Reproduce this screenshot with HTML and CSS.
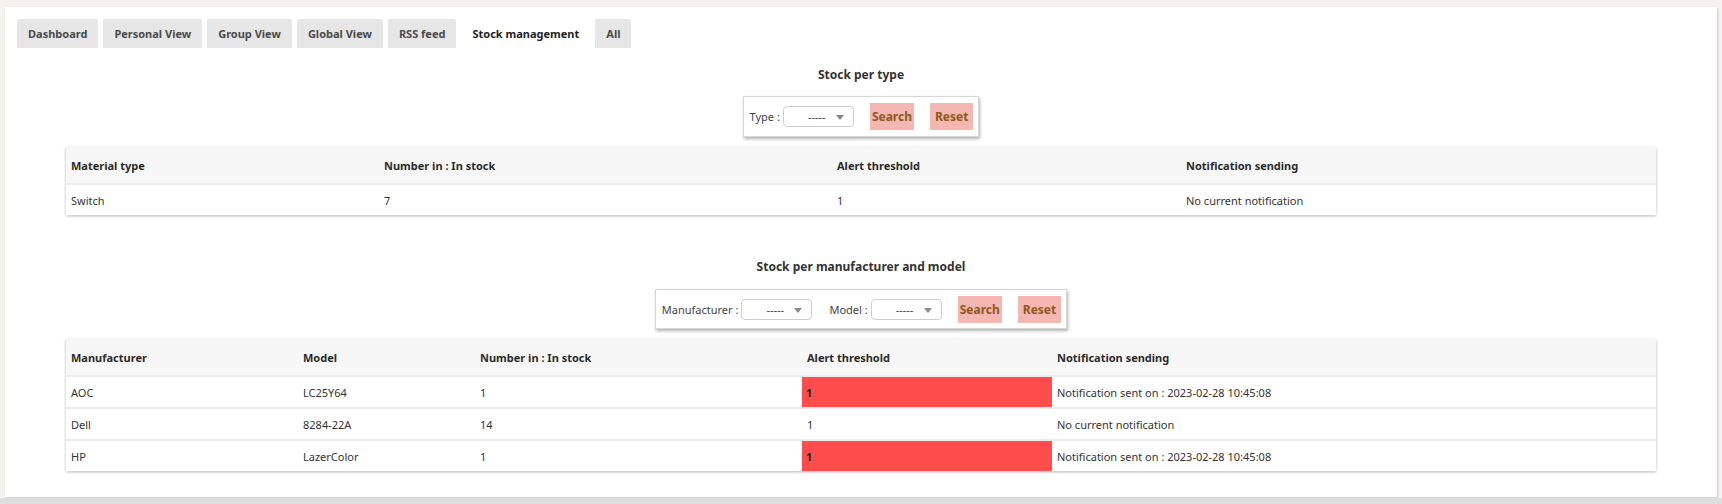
FILE: index.html
```html
<!DOCTYPE html>
<html>
<head>
<meta charset="utf-8">
<link rel="stylesheet" href="styles.css">
</head>
<body>
<div class="card">
  <ul class="tabs">
    <li class="tab">Dashboard</li>
    <li class="tab">Personal View</li>
    <li class="tab">Group View</li>
    <li class="tab">Global View</li>
    <li class="tab">RSS feed</li>
    <li class="tab active">Stock management</li>
    <li class="tab">All</li>
  </ul>

  <section class="section first">
    <h2 class="title">Stock per type</h2>
    <div class="filter-wrap">
      <form class="filter">
        <label class="lbl">Type :</label>
        <span class="select">-----<span class="arrow"></span></span>
        <button type="button" class="btn btn-search">Search</button>
        <button type="button" class="btn">Reset</button>
      </form>
    </div>
    <table class="grid t1">
      <colgroup><col class="c1a"><col class="c1b"><col class="c1c"><col></colgroup>
      <thead>
        <tr><th>Material type</th><th>Number in : In stock</th><th>Alert threshold</th><th>Notification sending</th></tr>
      </thead>
      <tbody>
        <tr><td>Switch</td><td>7</td><td>1</td><td>No current notification</td></tr>
      </tbody>
    </table>
  </section>

  <section class="section second">
    <h2 class="title">Stock per manufacturer and model</h2>
    <div class="filter-wrap">
      <form class="filter">
        <label class="lbl">Manufacturer :</label>
        <span class="select">-----<span class="arrow"></span></span>
        <label class="lbl lbl-model">Model :</label>
        <span class="select">-----<span class="arrow"></span></span>
        <button type="button" class="btn btn-search">Search</button>
        <button type="button" class="btn">Reset</button>
      </form>
    </div>
    <table class="grid t2">
      <colgroup><col class="c2a"><col class="c2b"><col class="c2c"><col class="c2d"><col></colgroup>
      <thead>
        <tr><th>Manufacturer</th><th>Model</th><th>Number in : In stock</th><th>Alert threshold</th><th>Notification sending</th></tr>
      </thead>
      <tbody>
        <tr><td>AOC</td><td>LC25Y64</td><td>1</td><td class="alert">1</td><td>Notification sent on : 2023-02-28 10:45:08</td></tr>
        <tr><td>Dell</td><td>8284-22A</td><td>14</td><td>1</td><td>No current notification</td></tr>
        <tr><td>HP</td><td>LazerColor</td><td>1</td><td class="alert">1</td><td>Notification sent on : 2023-02-28 10:45:08</td></tr>
      </tbody>
    </table>
  </section>
</div>
<div class="footer-band"></div>
</body>
</html>
```

FILE: styles.css
```css
html, body {
  margin: 0;
  padding: 0;
}
body {
  background: #f4f3ef;
  font-family: "Noto Sans", "Open Sans", sans-serif;
  font-size: 11px;
  color: #333;
}
.card {
  background: #fff;
  margin: 7px 5px 0 5px;
  height: 478px;
  padding: 12px 12px 0 12px;
  box-shadow: 1px 1px 2px rgba(0, 0, 0, 0.18);
}
.footer-band {
  margin-top: 1px;
  height: 8px;
  background: #dedede;
}
.tabs {
  list-style: none;
  margin: 0;
  padding: 0;
  display: flex;
  gap: 5px;
}
.tab {
  height: 29px;
  line-height: 29px;
  padding: 0 11px;
  background: #e6e6e6;
  border-radius: 2px 2px 0 0;
  font-weight: bold;
  color: #4a4a4a;
}
.tab.active {
  background: #fff;
  color: #222;
}
.title {
  margin: 0;
  font-size: 12px;
  line-height: 17px;
  font-weight: bold;
  color: #333;
  text-align: center;
}
.section.first {
  margin-top: 18px;
}
.section.second {
  margin-top: 43px;
}
.filter-wrap {
  display: flex;
  justify-content: center;
  margin-top: 13px;
}
.second .filter-wrap {
  margin-top: 14px;
}
.filter {
  display: flex;
  align-items: center;
  height: 39px;
  padding: 0 5px 0 6px;
  border: 1px solid #d6d6d6;
  box-shadow: 1px 2px 3px rgba(0, 0, 0, 0.3);
  background: #fff;
}
.second .filter {
  height: 38px;
}
.lbl {
  color: #444;
  margin-right: 3px;
}
.lbl-model {
  margin-left: 17px;
}
.select {
  position: relative;
  box-sizing: border-box;
  width: 71px;
  height: 21px;
  border: 1px solid #cfcfcf;
  border-radius: 4px;
  line-height: 19px;
  padding-left: 24px;
  color: #444;
  font-size: 11px;
}
.arrow {
  position: absolute;
  right: 9px;
  top: 8px;
  width: 0;
  height: 0;
  border-left: 4px solid transparent;
  border-right: 4px solid transparent;
  border-top: 5px solid #888;
}
.btn {
  font-family: inherit;
  font-size: 12px;
  font-weight: bold;
  color: #8e5820;
  background: #f5b7b1;
  border: none;
  height: 27px;
  padding: 0 5px;
  margin-left: 16px;
  cursor: pointer;
}
.btn-search {
  padding: 0 2px;
  margin-left: 16px;
}
.grid {
  width: 1590px;
  margin: 10px auto 0 auto;
  border-collapse: collapse;
  box-shadow: 0 1px 3px rgba(0, 0, 0, 0.28);
  table-layout: fixed;
}
.second .grid {
  margin-top: 10px;
}
.grid th {
  background: #f7f7f7;
  height: 36px;
  text-align: left;
  font-weight: bold;
  color: #2b2b2b;
  padding: 0 5px;
  border-bottom: 2px solid #ececec;
}
.grid td {
  height: 30px;
  padding: 0 5px;
  color: #333;
  border-top: 2px solid #ececec;
}
.grid tbody tr:first-child td {
  border-top: none;
}
.grid td.alert {
  background: #ff4d4d;
  font-weight: bold;
  color: #222;
  padding-left: 4px;
}
.c1a { width: 313px; }
.c1b { width: 453px; }
.c1c { width: 349px; }
.c2a { width: 232px; }
.c2b { width: 177px; }
.c2c { width: 327px; }
.c2d { width: 250px; }
```
